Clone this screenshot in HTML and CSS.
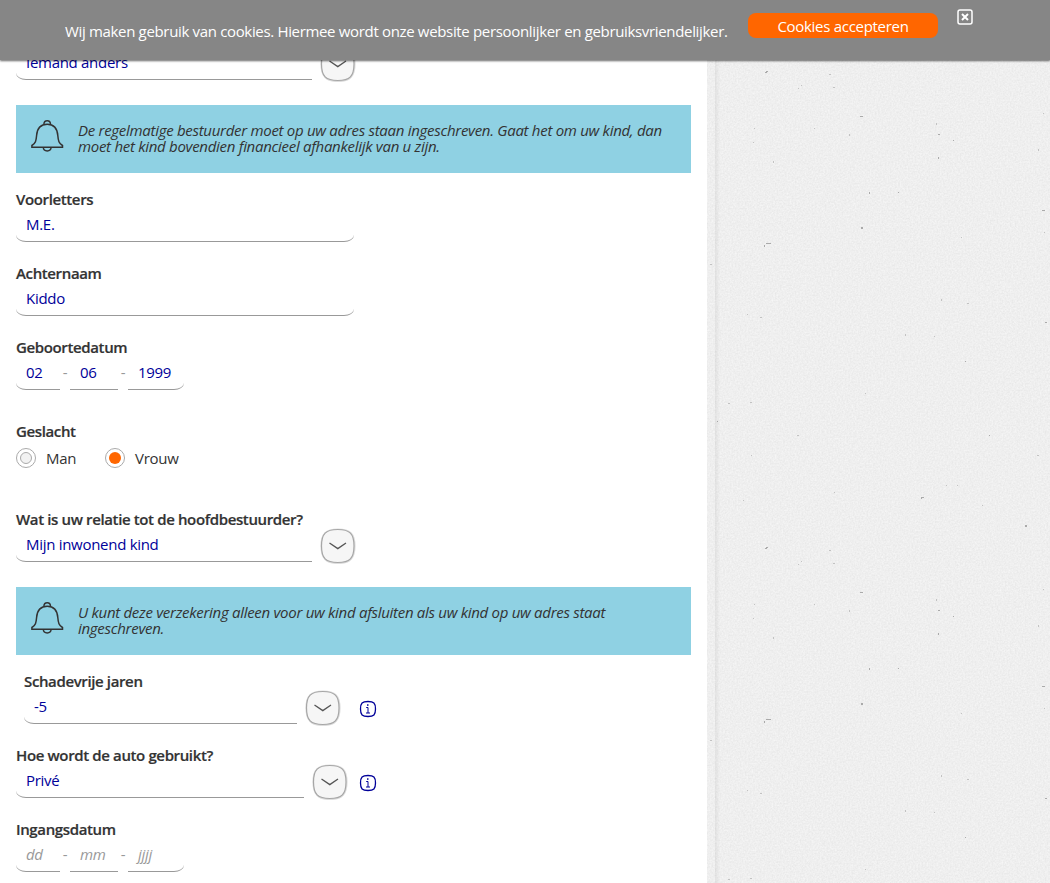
FILE: index.html
```html
<!DOCTYPE html>
<html lang="nl">
<head>
<meta charset="utf-8">
<title>Autoverzekering</title>
<link rel="stylesheet" href="styles.css">
</head>
<body>
<svg class="defs" width="0" height="0">
  <symbol id="chevron" viewBox="0 0 36 36">
    <path d="M18 1.6C30 1.6 34.4 6 34.4 18S30 34.9 18 34.9 1.6 30 1.6 18 6 1.6 18 1.6Z" fill="none" stroke="#ddd" stroke-width="2.4"/>
    <path d="M17.800 1.500C29.800 1.500 34 5.800 34 18S29.800 34.500 17.800 34.500 1.500 30.300 1.500 18 5.800 1.500 17.800 1.500Z" fill="#f6f6f6" stroke="#a6a6a6" stroke-width="1.2"/>
    <path d="M9.500 15L17.800 20.600L26 15" fill="none" stroke="#555" stroke-width="1.3"/>
  </symbol>
  <symbol id="bell" viewBox="0 0 34 34">
    <g fill="none" stroke="#333" stroke-width="1.5" transform="translate(.4 0)">
      <path d="M1.500 28.300V26.500C5.200 24.200 5.700 22 6.200 16.500C6.700 9.500 9.500 5.200 16.800 5.200S26.900 9.500 27.400 16.500C27.900 22 28.400 24.200 32.100 26.500V28.300Z"/>
      <path d="M13.500 5.300C13.600 .6 20 .6 20.100 5.300M12.900 28.500C13.200 33 20.400 33 20.700 28.500"/>
    </g>
  </symbol>
  <symbol id="info" viewBox="0 0 18 18">
    <path d="M9 1.500C14.800 1.500 16.500 3.200 16.500 9S14.800 16.500 9 16.500 1.500 14.800 1.500 9 3.200 1.500 9 1.500Z" fill="none" stroke="#009" stroke-width="1.300"/>
    <path d="M7.200 7.500H9V13M7 13H11" fill="none" stroke="#009" stroke-width="1"/>
    <rect x="8" y="4.300" width="1.500" height="1.500" fill="#009"/>
  </symbol>
</svg>

<div class="page">
  <main class="form">
    <div class="row first">
      <div class="input select">Iemand anders</div>
      <svg class="drop"><use href="#chevron"/></svg>
    </div>

    <div class="alert">
      <svg class="bell"><use href="#bell"/></svg>
      <p>De regelmatige bestuurder moet op uw adres staan ingeschreven. Gaat het om uw kind, dan<br>moet het kind bovendien financieel afhankelijk van u zijn.</p>
    </div>

    <div class="field">
      <label>Voorletters</label>
      <div class="input wide">M.E.</div>
    </div>
    <div class="field">
      <label>Achternaam</label>
      <div class="input wide">Kiddo</div>
    </div>
    <div class="field spaced">
      <label>Geboortedatum</label>
      <div class="row"><div class="input day">02</div><i class="dash">-</i><div class="input month">06</div><i class="dash">-</i><div class="input year">1999</div></div>
    </div>

    <div class="field gender">
      <label>Geslacht</label>
      <div class="radios"><span class="radio"></span><span class="man">Man</span><span class="radio on"></span><span>Vrouw</span></div>
    </div>

    <div class="field tight">
      <label>Wat is uw relatie tot de hoofdbestuurder?</label>
      <div class="row"><div class="input select">Mijn inwonend kind</div><svg class="drop"><use href="#chevron"/></svg></div>
    </div>

    <div class="alert">
      <svg class="bell"><use href="#bell"/></svg>
      <p>U kunt deze verzekering alleen voor uw kind afsluiten als uw kind op uw adres staat<br>ingeschreven.</p>
    </div>

    <div class="field indent">
      <label>Schadevrije jaren</label>
      <div class="row"><div class="input years">-5</div><svg class="drop"><use href="#chevron"/></svg><svg class="info"><use href="#info"/></svg></div>
    </div>
    <div class="field">
      <label>Hoe wordt de auto gebruikt?</label>
      <div class="row"><div class="input usage">Privé</div><svg class="drop"><use href="#chevron"/></svg><svg class="info near"><use href="#info"/></svg></div>
    </div>
    <div class="field">
      <label>Ingangsdatum</label>
      <div class="row empty"><div class="input day">dd</div><i class="dash">-</i><div class="input month">mm</div><i class="dash">-</i><div class="input year">jjjj</div></div>
    </div>
  </main>

  <aside class="paper">
    <svg width="343" height="883">
      <filter id="grain" x="0" y="0" width="100%" height="100%" color-interpolation-filters="sRGB">
        <feTurbulence type="fractalNoise" baseFrequency="0.6" numOctaves="2" seed="4"/>
        <feColorMatrix values=".08 0 0 0 .896  .08 0 0 0 .896  .08 0 0 0 .896  0 0 0 0 1"/>
      </filter>
      <pattern id="specks" width="343" height="476" patternUnits="userSpaceOnUse">
        <path fill="#aaa" d="M58 72h2v1h-2zM59 71h2v1h-2zM153 116h3v1h-3zM231 134h2v1h-2zM246 140h1v1h-1zM231 157h1v2h-1zM214 21h3v1h-2v1h-1zM318 49h2v2h-2zM162 192h1v2h-1zM191 192h1v1h-1zM154 227h2v2h-2zM335 210h3v1h-3zM57 245h1v2h-1zM59 243h5v1h-5zM10 421h1v1h-1zM338 322h2v1h-2zM282 435h1v1h-1zM258 361h1v1h-1z"/>
        <path fill="#c2c2c2" d="M94 85h1v1h-1zM91 88h1v1h-1zM122 74h2v1h-2zM126 87h2v1h-2zM47 128h1v1h-1zM46 142h1v1h-1zM66 161h1v2h-1zM107 128h1v1h-1zM142 134h1v2h-1zM229 123h1v2h-1zM44 455h1v1h-1zM36 24h1v1h-1zM239 9h1v1h-1zM250 9h1v1h-1zM275 29h1v1h-1zM127 16h1v1h-1zM336 113h1v1h-1zM331 149h1v2h-1zM337 232h1v1h-1zM254 237h1v1h-1zM21 403h2v1h-2zM43 402h2v1h-2zM234 299h1v2h-1zM260 303h2v1h-2zM198 334h1v2h-1zM227 336h1v1h-1zM53 317h2v1h-2zM40 314h1v1h-1zM90 435h2v1h-2zM158 393h1v1h-1zM330 455h2v1h-2zM3 264h2v1h-2z"/>
      </pattern>
      <linearGradient id="shade"><stop offset="0" stop-color="#000" stop-opacity=".06"/><stop offset="1" stop-color="#000" stop-opacity="0"/></linearGradient>
      <rect width="343" height="883" filter="url(#grain)"/>
      <rect width="343" height="883" fill="url(#specks)"/>
      <rect x="8" width="5" height="883" fill="url(#shade)"/>
    </svg>
  </aside>
</div>

<div class="cookies">
  <span class="message">Wij maken gebruik van cookies. Hiermee wordt onze website persoonlijker en gebruiksvriendelijker.</span>
  <span class="accept">Cookies accepteren</span>
  <svg class="close" viewBox="0 0 16 16"><rect x="1" y="1" width="14" height="14" rx="2" fill="none" stroke="#fff" stroke-width="1.500"/><path d="M5 5L11 11M11 5L5 11" stroke="#fff" stroke-width="2"/></svg>
</div>
</body>
</html>
```
FILE: styles.css
```css
* { box-sizing: border-box; }
body {
  margin: 0;
  height: 883px;
  overflow: hidden;
  position: relative;
  background: #fff;
  color: #333;
  font: 15px/20px "Open Sans", "Noto Sans", sans-serif;
  letter-spacing: -.29px;
}
.defs { position: absolute; }
.page { display: flex; height: 883px; }
.form { width: 707px; padding: 48px 16px 0; background: #fff; }
.paper { width: 343px; }
.paper svg { display: block; }

.row { display: flex; }
.first { margin-bottom: 25px; }
.alert {
  display: flex;
  height: 68px;
  padding: 14px 14px;
  margin-bottom: 17px;
  background: #8fd1e3;
  font-style: italic;
  line-height: 16px;
  white-space: nowrap;
}
.alert p { margin: 3px 0 0 14px; }
.bell { flex: none; width: 34px; height: 34px; }

.field { margin-bottom: 22px; }
.field.spaced { margin-bottom: 32px; }
.field.gender { margin-bottom: 42px; }
.field.tight { margin-bottom: 25px; }
.field.indent { margin-left: 8px; }
label {
  display: block;
  height: 20px;
  line-height: 18px;
  font-weight: 600;
  letter-spacing: -.37px;
  -webkit-text-stroke: .2px #333;
  white-space: nowrap;
}

.input {
  height: 32px;
  padding: 4px 10px 0;
  border-bottom: 1px solid #999;
  border-bottom-left-radius: 10px 7px;
  color: #009;
  white-space: nowrap;
}
.wide { width: 338px; border-bottom-right-radius: 10px 7px; }
.select { width: 296px; }
.years { width: 273px; }
.usage { width: 288px; }
.day { width: 44px; }
.month { width: 48px; border-radius: 0; }
.year { width: 56px; border-radius: 0; border-bottom-right-radius: 10px 7px; }
.dash { width: 10px; padding-top: 4px; text-align: center; font-style: normal; color: #999; }
.empty .input { color: #999; font-style: italic; }
.drop { width: 36px; height: 36px; margin: -2px 0 -2px 8px; }
.info { width: 18px; height: 18px; margin: 8px 0 0 18px; }
.info.near { margin-left: 11px; }

.radios { display: flex; align-items: center; height: 20px; margin-top: 6px; }
.radio {
  display: flex;
  align-items: center;
  justify-content: center;
  width: 20px;
  height: 20px;
  margin-right: 10px;
  border: 1px solid #aaa;
  border-radius: 50%;
}
.radio::before {
  content: "";
  width: 10px;
  height: 10px;
  border: 1px solid #aaa;
  border-radius: 50%;
  background: #f2f2f2;
}
.radio.on::before { width: 12px; height: 12px; border: 0; background: #f60; }
.man { width: 59px; }

.cookies {
  position: absolute;
  inset: 0 0 auto;
  display: flex;
  align-items: flex-start;
  height: 60px;
  padding-left: 65px;
  background: #868686;
  box-shadow: 0 1px 2px rgba(0, 0, 0, .6);
  color: #fff;
  white-space: nowrap;
}
.message { width: 683px; padding-top: 21px; letter-spacing: -.335px; }
.accept {
  width: 190px;
  height: 25px;
  margin-top: 13px;
  border-radius: 8px;
  background: #f60;
  line-height: 27px;
  text-align: center;
}
.close { width: 16px; height: 16px; margin: 9px 0 0 19px; }
```
